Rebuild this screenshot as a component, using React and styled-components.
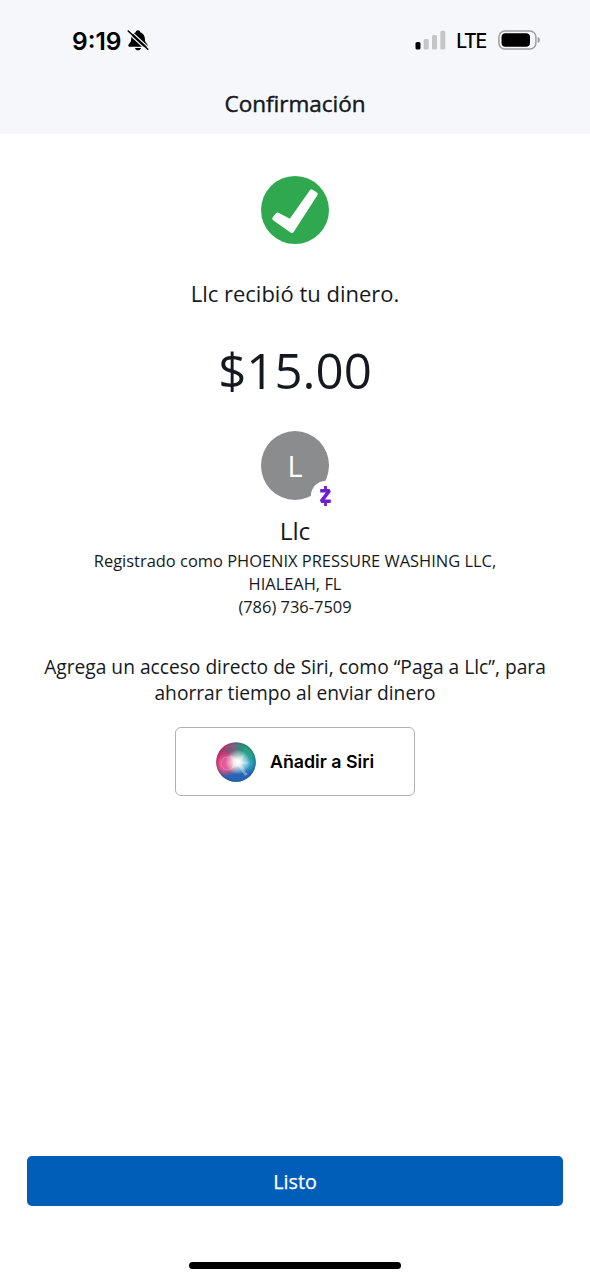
import React from 'react';
import styled, { createGlobalStyle } from 'styled-components';

const GlobalStyle = createGlobalStyle`
  * {
    box-sizing: border-box;
  }

  body {
    margin: 0;
    background: #ffffff;
    color: #15191e;
    font-family: 'Open Sans', 'Noto Sans', sans-serif;
  }

  svg {
    display: block;
    flex: none;
  }

  h1, h2, p {
    margin: 0;
    font-weight: 400;
  }
`;

const Screen = styled.div`
  display: flex;
  flex-direction: column;
  width: 590px;
  height: 1280px;
  overflow: hidden;
`;

const Header = styled.header`
  height: 134px;
  background: #f5f7fa;
`;

const StatusBar = styled.div`
  display: flex;
  justify-content: space-between;
  align-items: center;
  height: 80px;
  padding: 0 49px 0 72px;
  color: #000000;
  font-family: Inter, 'Liberation Sans', sans-serif;
`;

const StatusGroup = styled.div`
  display: flex;
  align-items: center;
`;

const Time = styled.span`
  margin: 2px 5px 0 0;
  font-size: 24.5px;
  font-weight: 600;
  line-height: 30px;
`;

const Network = styled.span`
  margin: 2px 12px 0 10px;
  font-size: 19.5px;
  font-weight: 500;
  line-height: 26px;
  letter-spacing: -1.3px;
`;

const Title = styled.h1`
  font-size: 22.5px;
  line-height: 48px;
  text-align: center;
  -webkit-text-stroke: 0.45px currentColor;
`;

const Content = styled.main`
  display: flex;
  flex: 1;
  flex-direction: column;
  align-items: center;
  padding-top: 42px;
  text-align: center;
`;

const Message = styled.p`
  margin-top: 34px;
  font-size: 22px;
  line-height: 30px;
`;

const Amount = styled.p`
  margin-top: 28px;
  font-size: 49.2px;
  line-height: 68px;
`;

const Avatar = styled.div`
  position: relative;
  display: flex;
  justify-content: center;
  align-items: center;
  width: 68px;
  height: 69px;
  margin-top: 27px;
  padding-bottom: 1px;
  border-radius: 50%;
  background: #8b8c8e;
  color: #ffffff;
  font-size: 29px;
`;

const ZelleBadge = styled.span`
  position: absolute;
  top: 50px;
  left: 50px;
  display: flex;
  justify-content: center;
  align-items: center;
  width: 29px;
  height: 29px;
  border-radius: 50%;
  background: #ffffff;
`;

const Name = styled.h2`
  margin-top: 14px;
  font-size: 24.5px;
  line-height: 34px;
`;

const Details = styled.p`
  width: 430px;
  margin-top: 1px;
  font-size: 16.45px;
  line-height: 23px;
`;

const Phone = styled(Details)`
  margin-top: 0;
`;

const Hint = styled.p`
  width: 520px;
  margin-top: 36px;
  font-size: 19.2px;
  line-height: 26px;
`;

const SiriButton = styled.button`
  display: flex;
  align-items: center;
  gap: 14px;
  width: 240px;
  height: 69px;
  margin-top: 21px;
  padding: 0 0 0 40px;
  border: 1.5px solid #b0b0b2;
  border-radius: 6px;
  background: #ffffff;
  color: #000000;
  font-family: Inter, 'Liberation Sans', sans-serif;
  font-size: 17.8px;
  font-weight: 600;
`;

const Footer = styled.footer`
  display: flex;
  flex-direction: column;
  align-items: center;
  padding: 0 27px 11px;
`;

const DoneButton = styled.button`
  width: 100%;
  height: 50px;
  padding: 0;
  border: 0;
  border-radius: 5px;
  background: #005eb8;
  color: #ffffff;
  font-family: inherit;
  font-size: 19.7px;
  -webkit-text-stroke: 0.25px currentColor;
`;

const HomeIndicator = styled.div`
  width: 212px;
  height: 7px;
  margin-top: 56px;
  border-radius: 4px;
  background: #000000;
`;

const MutedBell = () => (
  <svg width="22" height="22" viewBox="0 0 22 22">
    <path
      d="M11 1.200c-1.300 0-2.200.8-2.300 2C6 4.200 4.400 6.300 4.200 9l-.3 3.200L1.500 15.800c-.7 1 0 1.900 1 1.900h17c1 0 1.700-.9 1-1.900l-2.400-3.600-.3-3.200c-.2-2.700-1.800-4.800-4.500-5.800-.1-1.200-1-2-2.300-2zM8 18.900h6c-.3 1.400-1.500 2.300-3 2.300s-2.700-.9-3-2.300z"
      fill="#000"
    />
    <path d="M0 3.200l20.500 19" stroke="#f5f7fa" strokeWidth="1.200" />
    <path d="M2 .3l20 18.500" stroke="#f5f7fa" strokeWidth="1.200" />
    <path d="M1.200 2l19.600 18.200" stroke="#000" strokeWidth="1.500" strokeLinecap="round" />
  </svg>
);

const Signal = () => (
  <svg width="31" height="20" viewBox="0 0 31 20">
    <rect x="0.500" y="12" width="5" height="7.500" rx="1.500" fill="#000" />
    <rect x="8.700" y="9" width="5" height="10.500" rx="1.500" fill="#c3c5c7" />
    <rect x="17" y="5" width="5" height="14.500" rx="1.500" fill="#c3c5c7" />
    <rect x="25.300" y="0.700" width="5" height="18.800" rx="1.500" fill="#c3c5c7" />
  </svg>
);

const Battery = () => (
  <svg width="43" height="20" viewBox="0 0 43 20">
    <rect x="0.900" y="0.900" width="37" height="18.200" rx="6" fill="none" stroke="#9c9ea0" strokeWidth="1.500" />
    <rect x="3.500" y="3.300" width="28.500" height="13.400" rx="4" fill="#000" />
    <path d="M39.700 7c1.400.4 2.200 1.500 2.200 3s-.8 2.600-2.200 3z" fill="#9c9ea0" />
  </svg>
);

const SuccessIcon = () => (
  <svg width="68" height="68" viewBox="0 0 68 68">
    <circle cx="34" cy="34" r="34" fill="#2fa84f" />
    <path
      d="M13.300 42.500l3.200-4 12.900 6.800L50.500 15.300l4.200 2.800L31 55z"
      fill="#fff"
      stroke="#fff"
      strokeWidth="4"
      strokeLinejoin="round"
    />
  </svg>
);

const ZelleLogo = () => (
  <svg width="13" height="20" viewBox="0 0 13 20">
    <path d="M1.200 4.700h9.300L2.200 15.300h9.600" fill="none" stroke="#6d1ed4" strokeWidth="3.500" strokeLinejoin="bevel" />
    <path d="M6.500 0v4M6.500 16v4" stroke="#6d1ed4" strokeWidth="2.800" />
  </svg>
);

const SiriOrb = () => (
  <svg width="40" height="40" viewBox="0 0 40 40">
    <defs>
      <clipPath id="orb">
        <circle cx="20" cy="20" r="19.800" />
      </clipPath>
      <linearGradient id="base" x1="0" y1="0.300" x2="1" y2="0.500">
        <stop offset="0" stopColor="#d6245f" />
        <stop offset="0.300" stopColor="#94517e" />
        <stop offset="0.600" stopColor="#27917e" />
        <stop offset="1" stopColor="#168c83" />
      </linearGradient>
      <linearGradient id="blue" x1="0.400" y1="0" x2="0.600" y2="1">
        <stop offset="0.500" stopColor="#2878c5" stopOpacity="0" />
        <stop offset="0.800" stopColor="#2766b5" />
      </linearGradient>
      <radialGradient id="pink">
        <stop offset="0" stopColor="#ed5a98" />
        <stop offset="0.500" stopColor="#ed5a98" stopOpacity="0.800" />
        <stop offset="1" stopColor="#df326d" stopOpacity="0" />
      </radialGradient>
      <radialGradient id="cyan">
        <stop offset="0" stopColor="#4fc5e5" stopOpacity="0.900" />
        <stop offset="1" stopColor="#299fc5" stopOpacity="0" />
      </radialGradient>
      <radialGradient id="glow">
        <stop offset="0" stopColor="#fff" />
        <stop offset="0.300" stopColor="#fff" stopOpacity="0.850" />
        <stop offset="1" stopColor="#fff" stopOpacity="0" />
      </radialGradient>
      <radialGradient id="rim">
        <stop offset="0.860" stopColor="#293653" stopOpacity="0" />
        <stop offset="1" stopColor="#293653" stopOpacity="0.300" />
      </radialGradient>
    </defs>
    <g clipPath="url(#orb)">
      <rect width="40" height="40" fill="url(#base)" />
      <rect width="40" height="40" fill="url(#blue)" />
      <path d="M7 8C14 3 21 8 24 19 17 17 12 13 7 8z" fill="#5c5970" opacity="0.300" />
      <path d="M22 19l7-15c5 2 8 6 9 11z" fill="#31b987" opacity="0.400" />
      <circle cx="10" cy="22" r="13" fill="url(#pink)" />
      <circle cx="31" cy="21" r="11" fill="url(#cyan)" />
      <circle cx="11.500" cy="21.500" r="6.500" fill="none" stroke="#ffb2d2" strokeWidth="0.800" opacity="0.400" />
      <path d="M20 21l12 11-3 2z" fill="#b5c7f0" opacity="0.500" />
      <circle cx="21.500" cy="20" r="12.500" fill="url(#glow)" />
      <path d="M14 13l8 4 7-5-4 7 8 2-8 1 5 7-8-5-7 3 3-6z" fill="#fff" opacity="0.300" />
      <circle cx="20" cy="20" r="20" fill="url(#rim)" />
    </g>
  </svg>
);

const App = () => {
  return (
    <>
      <GlobalStyle />
      <Screen>
        <Header>
          <StatusBar>
            <StatusGroup>
              <Time>9:19</Time>
              <MutedBell />
            </StatusGroup>
            <StatusGroup>
              <Signal />
              <Network>LTE</Network>
              <Battery />
            </StatusGroup>
          </StatusBar>
          <Title>Confirmación</Title>
        </Header>

        <Content>
          <SuccessIcon />
          <Message>Llc recibió tu dinero.</Message>
          <Amount>$15.00</Amount>
          <Avatar>
            L
            <ZelleBadge>
              <ZelleLogo />
            </ZelleBadge>
          </Avatar>
          <Name>Llc</Name>
          <Details>Registrado como PHOENIX PRESSURE WASHING LLC, HIALEAH, FL</Details>
          <Phone>(786) 736-7509</Phone>
          <Hint>
            Agrega un acceso directo de Siri, como “Paga a Llc”, para ahorrar tiempo al enviar dinero
          </Hint>
          <SiriButton>
            <SiriOrb />
            Añadir a Siri
          </SiriButton>
        </Content>

        <Footer>
          <DoneButton>Listo</DoneButton>
          <HomeIndicator />
        </Footer>
      </Screen>
    </>
  );
};

export default App;
